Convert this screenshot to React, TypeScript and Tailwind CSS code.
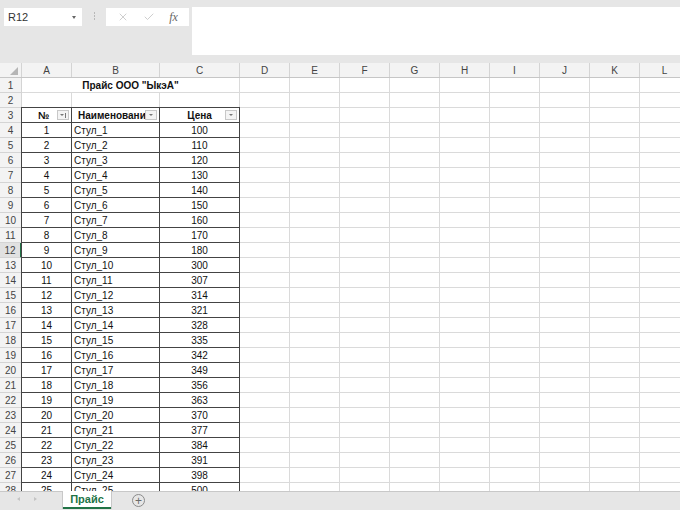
import { X, Check } from "lucide-react";

const cols = [
  { k: "A", w: 50 },
  { k: "B", w: 88 },
  { k: "C", w: 80 },
  { k: "D", w: 50 },
  { k: "E", w: 50 },
  { k: "F", w: 50 },
  { k: "G", w: 50 },
  { k: "H", w: 50 },
  { k: "I", w: 50 },
  { k: "J", w: 50 },
  { k: "K", w: 50 },
  { k: "L", w: 50 },
];

const prices = [100, 110, 120, 130, 140, 150, 160, 170, 180, 300, 307, 314, 321, 328, 335, 342, 349, 356, 363, 370, 377, 384, 391, 398, 500];

function FilterBtn({ sort }: { sort?: boolean }) {
  return (
    <span className="absolute right-[2px] top-[2px] w-[12px] h-[10px] border border-[#c8c8c8] bg-[#f4f4f4] flex items-center justify-center">
      <span className="flex items-center gap-[1px]">
        <span className="w-0 h-0 border-l-[2px] border-r-[2px] border-t-[2px] border-l-transparent border-r-transparent border-t-[#777]" />
        {sort && <span className="w-[1px] h-[5px] bg-[#777]" />}
      </span>
    </span>
  );
}

function Row({ n, children, selected }: { n: number; children?: React.ReactNode; selected?: boolean }) {
  return (
    <div className="flex h-[15px]">
      <div
        className={
          "w-[22px] shrink-0 flex items-center justify-center text-[10px] text-[#444] border-b border-r border-[#d4d4d4] " +
          (selected ? "bg-[#e1e1e1] border-r-[#217346] border-r-2" : "bg-[#f3f3f3]")
        }
      >
        {n}
      </div>
      {children}
    </div>
  );
}

function Cell({ w, children, cls = "" }: { w: number; children?: React.ReactNode; cls?: string }) {
  return (
    <div style={{ width: w }} className={"shrink-0 h-[15px] border-b border-r border-[#dadada] flex items-center text-[10px] text-[#111] " + cls}>
      {children}
    </div>
  );
}

function EmptyCells({ from }: { from: number }) {
  return (
    <>
      {cols.slice(from).map((c) => (
        <Cell key={c.k} w={c.w} />
      ))}
    </>
  );
}

export default function App() {
  return (
    <div className="w-[680px] h-[510px] overflow-hidden flex flex-col bg-white font-['Liberation_Sans',Arial,sans-serif]">
      {/* formula bar */}
      <div className="h-[63px] shrink-0 bg-[#e6e6e6] flex items-start pt-[7px] pl-[4px]">
        <div className="w-[78px] h-[18px] mt-[1px] bg-white flex items-center justify-between px-[4px] text-[11px] text-[#333]">
          <span>R12</span>
          <span className="w-0 h-0 border-l-[2px] border-r-[2px] border-t-[3px] border-l-transparent border-r-transparent border-t-[#666] mr-[2px]" />
        </div>
        <div className="w-[24px] flex flex-col items-center gap-[1px] pt-[5px]">
          <span className="w-[1px] h-[2px] bg-[#b8b8b8]" />
          <span className="w-[1px] h-[2px] bg-[#b8b8b8]" />
          <span className="w-[1px] h-[2px] bg-[#b8b8b8]" />
        </div>
        <div className="w-[83px] h-[18px] mt-[1px] bg-white flex items-center justify-around px-[4px] text-[#bdbdbd]">
          <X size={12} strokeWidth={1.5} />
          <Check size={12} strokeWidth={1.5} />
          <span className="font-['Liberation_Serif',serif] italic text-[12px] text-[#666]">fx</span>
        </div>
        <div className="flex-1 h-[48px] ml-[3px] bg-white" />
      </div>

      {/* grid */}
      <div className="flex-1 overflow-hidden bg-white">
        <div className="flex h-[15px] bg-[#f3f3f3] border-b border-[#c6c6c6]">
          <div className="w-[22px] shrink-0 border-r border-[#d4d4d4] relative">
            <span className="absolute right-[3px] bottom-[2px] w-0 h-0 border-b-[8px] border-l-[8px] border-b-[#b5b5b5] border-l-transparent" />
          </div>
          {cols.map((c) => (
            <div key={c.k} style={{ width: c.w }} className="shrink-0 border-r border-[#d4d4d4] flex items-center justify-center text-[10px] text-[#444]">
              {c.k}
            </div>
          ))}
        </div>

        <Row n={1}>
          <div className="w-[218px] shrink-0 h-[15px] border-b border-r border-[#dadada] flex items-center justify-center text-[10px] font-bold text-[#111]">
            Прайс ООО "ЫкэА"
          </div>
          <EmptyCells from={3} />
        </Row>
        <Row n={2}>
          <EmptyCells from={0} />
        </Row>
        <Row n={3}>
          <div className="flex border-t border-l border-[#444] -mt-[1px] -ml-[1px]">
            <div className="w-[50px] h-[15px] shrink-0 border-r border-b border-[#444] relative flex items-center justify-center text-[10px] font-bold text-[#111]">
              <span className="-ml-[6px]">№</span>
              <FilterBtn sort />
            </div>
            <div className="w-[88px] h-[15px] shrink-0 border-r border-b border-[#444] relative flex items-center pl-[6px] text-[10px] font-bold text-[#111] overflow-hidden whitespace-nowrap">
              Наименовани
              <FilterBtn />
            </div>
            <div className="w-[80px] h-[15px] shrink-0 border-r border-b border-[#444] relative flex items-center justify-center text-[10px] font-bold text-[#111]">
              Цена
              <FilterBtn />
            </div>
          </div>
          <EmptyCells from={3} />
        </Row>
        {prices.map((p, i) => (
          <Row key={i} n={i + 4} selected={i + 4 === 12}>
            <div className="flex -ml-[1px] border-l border-[#444]">
              <div className="w-[50px] h-[15px] shrink-0 border-r border-b border-[#444] flex items-center justify-center text-[10px] text-[#111]">
                {i + 1}
              </div>
              <div className="w-[88px] h-[15px] shrink-0 border-r border-b border-[#444] flex items-center pl-[2px] text-[10px] text-[#111]">
                Стул_{i + 1}
              </div>
              <div className="w-[80px] h-[15px] shrink-0 border-r border-b border-[#444] flex items-center justify-center text-[10px] text-[#111]">
                {p}
              </div>
            </div>
            <EmptyCells from={3} />
          </Row>
        ))}
      </div>

      {/* sheet tabs */}
      <div className="h-[19px] shrink-0 bg-[#e6e6e6] border-t border-[#c8c8c8] flex items-start">
        <div className="w-[63px] flex items-center gap-[14px] pl-[17px] pt-[5px]">
          <span className="w-0 h-0 border-t-[2px] border-b-[2px] border-r-[3px] border-t-transparent border-b-transparent border-r-[#c4c4c4]" />
          <span className="w-0 h-0 border-t-[2px] border-b-[2px] border-l-[3px] border-t-transparent border-b-transparent border-l-[#c4c4c4]" />
        </div>
        <div className="w-[48px] h-[18px] -mt-[1px] bg-white border-b-2 border-[#217346] flex items-center justify-center text-[11px] font-bold text-[#217346] shadow-[1px_0_0_#c8c8c8,-1px_0_0_#c8c8c8]">
          Прайс
        </div>
        <div className="ml-[21px] mt-[2px] w-[13px] h-[13px] rounded-full border border-[#8a8a8a] flex items-center justify-center text-[#6a6a6a] text-[12px] leading-none">
          +
        </div>
      </div>
    </div>
  );
}
